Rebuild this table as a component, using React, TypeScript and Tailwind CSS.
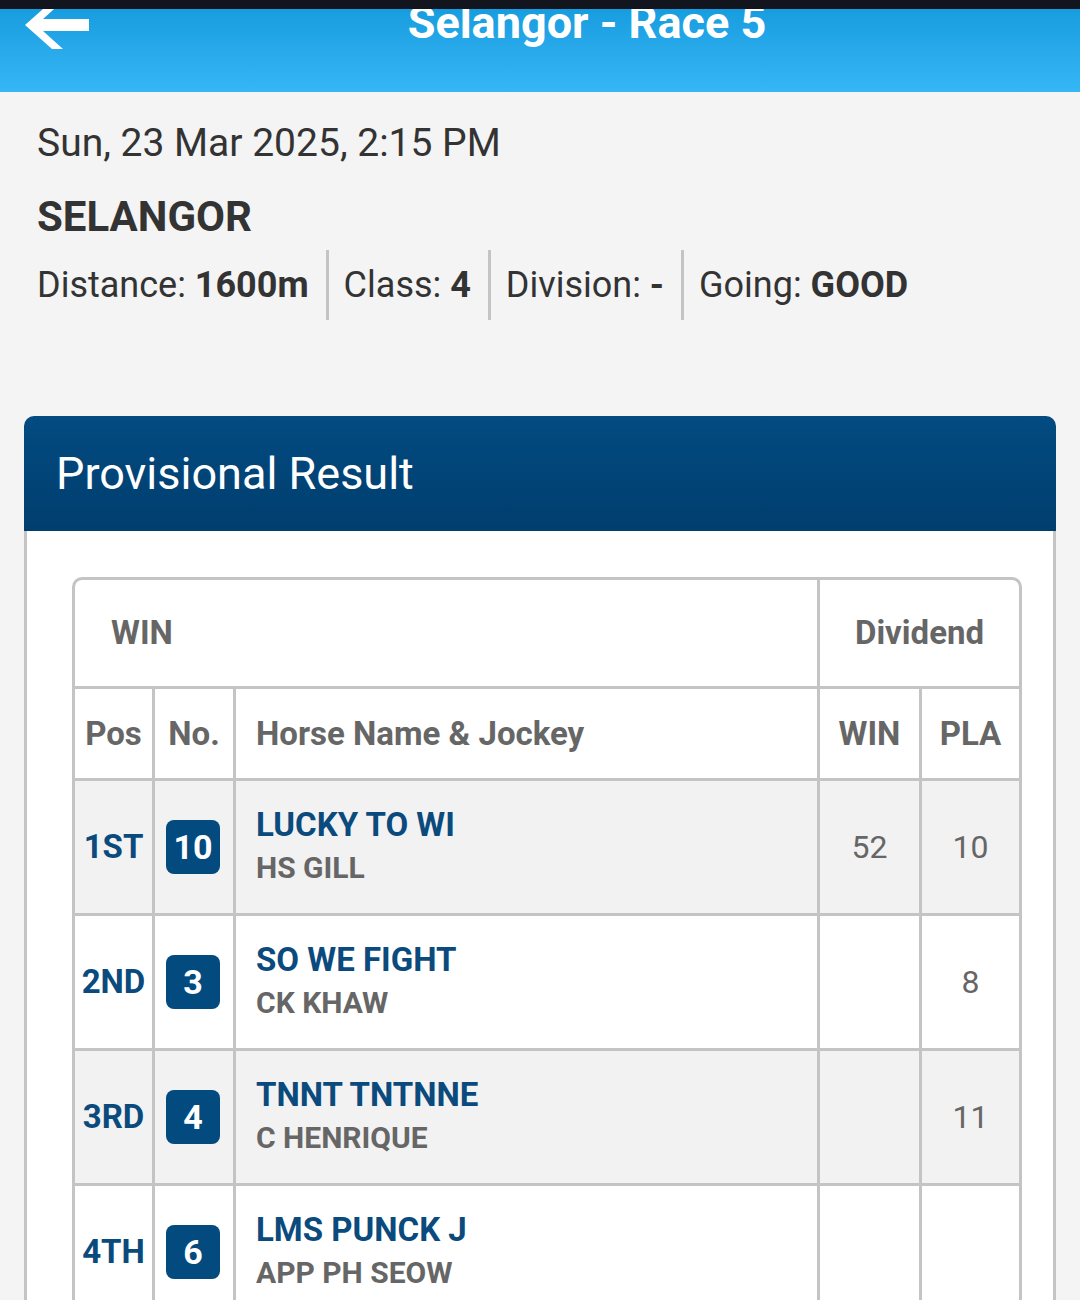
import React from "react";

type Row = {
  pos: string;
  no: string;
  horse: string;
  jockey: string;
  win?: string;
  pla?: string;
};

const rows: Row[] = [
  { pos: "1ST", no: "10", horse: "LUCKY TO WI", jockey: "HS GILL", win: "52", pla: "10" },
  { pos: "2ND", no: "3", horse: "SO WE FIGHT", jockey: "CK KHAW", pla: "8" },
  { pos: "3RD", no: "4", horse: "TNNT TNTNNE", jockey: "C HENRIQUE", pla: "11" },
  { pos: "4TH", no: "6", horse: "LMS PUNCK J", jockey: "APP PH SEOW" },
];

export default function App() {
  return (
    <div className="min-h-screen bg-[#f4f4f4] font-['Roboto','Liberation_Sans',sans-serif] text-[#333]">
      {/* status bar */}
      <div className="h-[9px] bg-[#12151d]" />

      {/* app bar — title sits partly under the status bar */}
      <header className="h-[83px] overflow-hidden bg-gradient-to-b from-[#179ddf] to-[#35b6f6] flex items-start">
        <div className="w-[94px] shrink-0 pl-[25px]">
          <svg width="65" height="41" viewBox="25 9 65 41" className="block">
            <polygon
              points="25,25 52,49 63,49 43,31 89,31 89,19 43,19 63,1 52,1"
              fill="#fff"
            />
          </svg>
        </div>
        <h1 className="flex-1 text-center text-white font-bold text-[45px] leading-[45px] -mt-[9px]">
          Selangor - Race 5
        </h1>
      </header>

      {/* race info */}
      <section className="pl-[37px] pt-[29px]">
        <p className="text-[39px] leading-[45px]">Sun, 23 Mar 2025, 2:15 PM</p>
        <p className="mt-[27px] text-[42px] leading-[48px] font-bold">SELANGOR</p>
        <div className="mt-[9px] flex items-stretch h-[70px] text-[36px] leading-[36px]">
          <InfoItem first label="Distance:" value="1600m" />
          <InfoItem label="Class:" value="4" />
          <InfoItem label="Division:" value="-" />
          <InfoItem last label="Going:" value="GOOD" />
        </div>
      </section>

      {/* result card */}
      <section className="mx-[24px] mt-[96px]">
        <div className="h-[115px] rounded-t-[10px] bg-gradient-to-b from-[#034b81] to-[#003e6e] flex items-center pl-[32px]">
          <h2 className="text-white text-[45px]">Provisional Result</h2>
        </div>
        <div className="bg-white border-x-[3px] border-[#c4c4c4] pt-[46px] pl-[45px] pr-[31px] pb-10">
          <div className="border-[3px] border-[#c4c4c4] rounded-t-[10px] overflow-hidden text-[#666]">
            {/* bet type row */}
            <div className="flex h-[109px] border-b-[3px] border-[#c4c4c4] font-bold text-[33px]">
              <div className="w-[745px] border-r-[3px] border-[#c4c4c4] flex items-center pl-[36px]">WIN</div>
              <div className="flex-1 flex items-center justify-center">Dividend</div>
            </div>
            {/* column headers */}
            <div className="flex h-[92px] border-b-[3px] border-[#c4c4c4] font-bold text-[33px]">
              <div className="w-[80px] border-r-[3px] border-[#c4c4c4] flex items-center justify-center">Pos</div>
              <div className="w-[81px] border-r-[3px] border-[#c4c4c4] flex items-center justify-center">No.</div>
              <div className="w-[584px] border-r-[3px] border-[#c4c4c4] flex items-center pl-[20px]">Horse Name &amp; Jockey</div>
              <div className="w-[102px] border-r-[3px] border-[#c4c4c4] flex items-center justify-center">WIN</div>
              <div className="flex-1 flex items-center justify-center">PLA</div>
            </div>
            {rows.map((r, i) => (
              <ResultRow key={r.pos} row={r} shaded={i % 2 === 0} />
            ))}
          </div>
        </div>
      </section>
    </div>
  );
}

function InfoItem({
  label,
  value,
  first = false,
  last = false,
}: {
  label: string;
  value: string;
  first?: boolean;
  last?: boolean;
}) {
  return (
    <div
      className={`flex items-center ${first ? "" : "pl-[15px]"} ${
        last ? "" : "pr-[17px] border-r-[3px] border-[#c4c4c4]"
      }`}
    >
      <span>{label}&nbsp;</span>
      <span className="font-bold">{value}</span>
    </div>
  );
}

function ResultRow({ row, shaded }: { row: Row; shaded: boolean }) {
  return (
    <div
      className={`flex h-[135px] border-b-[3px] border-[#c4c4c4] ${
        shaded ? "bg-[#f2f2f2]" : "bg-white"
      }`}
    >
      <div className="w-[80px] border-r-[3px] border-[#c4c4c4] flex items-center justify-center text-[33px] font-bold text-[#0a4a7d]">
        {row.pos}
      </div>
      <div className="w-[81px] border-r-[3px] border-[#c4c4c4] flex items-center justify-center pr-[2px]">
        <span className="w-[54px] h-[54px] rounded-[8px] bg-[#034a7f] text-white font-bold text-[34px] flex items-center justify-center">
          {row.no}
        </span>
      </div>
      <div className="w-[584px] border-r-[3px] border-[#c4c4c4] flex flex-col justify-center pl-[20px]">
        <span className="text-[33px] leading-[42px] font-bold text-[#0a4a7d]">{row.horse}</span>
        <span className="text-[30px] leading-[44px] font-bold text-[#666]">{row.jockey}</span>
      </div>
      <div className="w-[102px] border-r-[3px] border-[#c4c4c4] flex items-center justify-center text-[32px]">
        {row.win ?? ""}
      </div>
      <div className="flex-1 flex items-center justify-center text-[32px]">{row.pla ?? ""}</div>
    </div>
  );
}
